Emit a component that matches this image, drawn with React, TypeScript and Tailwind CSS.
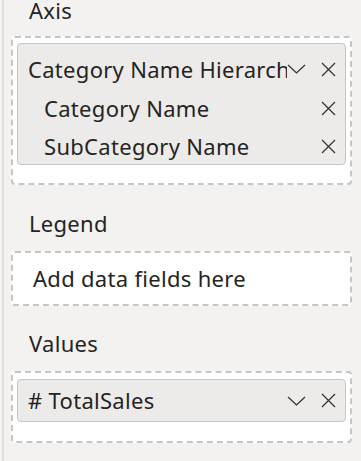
import React from 'react';

const font = { fontFamily: '"Noto Sans", "Open Sans", sans-serif' };

function CloseIcon() {
  return (
    <svg width="15" height="15" viewBox="0 0 15 15" className="shrink-0">
      <path d="M1 1 L14 14 M14 1 L1 14" stroke="#323130" strokeWidth="1.2" fill="none" />
    </svg>
  );
}

function ChevronIcon() {
  return (
    <svg width="19" height="10" viewBox="0 0 19 10" className="shrink-0">
      <path d="M1 1 L9.5 9 L18 1" stroke="#323130" strokeWidth="1.2" fill="none" />
    </svg>
  );
}

function SectionLabel({ children, className }: { children: React.ReactNode; className?: string }) {
  return <div className={`pl-[18px] h-[20px] leading-[20px] ${className ?? ''}`}>{children}</div>;
}

export default function App() {
  return (
    <div
      className="w-[361px] h-[461px] bg-[#f3f2f1] flex overflow-hidden text-[22px] tracking-[0.3px] text-[#252423]"
      style={font}
    >
      <div className="w-[2px] ml-[2px] bg-[#e1dfdd] shrink-0" />
      <div className="flex flex-col pl-[7px] w-[348px]">
        {/* Axis */}
        <SectionLabel>Axis</SectionLabel>
        <div className="mt-[16px] w-[341px] h-[149px] border-2 border-dashed border-[#c8c6c4] rounded-[4px] bg-white pt-[5px] px-[4px]">
          <div className="h-[122px] border border-[#c8c6c4] rounded-[4px] bg-[#edebe9] pt-[5px]">
            <div className="h-[40px] flex items-center pl-[10px] pr-[9px]">
              <span className="flex-1 min-w-0 overflow-hidden whitespace-nowrap">Category Name Hierarchy</span>
              <ChevronIcon />
              <span className="w-[15px]" />
              <CloseIcon />
            </div>
            <div className="h-[38px] flex items-center pl-[26px] pr-[9px]">
              <span className="flex-1 min-w-0 overflow-hidden whitespace-nowrap">Category Name</span>
              <CloseIcon />
            </div>
            <div className="h-[38px] flex items-center pl-[26px] pr-[9px]">
              <span className="flex-1 min-w-0 overflow-hidden whitespace-nowrap">SubCategory Name</span>
              <CloseIcon />
            </div>
          </div>
        </div>

        {/* Legend */}
        <SectionLabel className="mt-[28px]">Legend</SectionLabel>
        <div className="mt-[18px] w-[341px] h-[55px] border-2 border-dashed border-[#c8c6c4] rounded-[4px] bg-white flex items-center pl-[20px]">
          Add data fields here
        </div>

        {/* Values */}
        <SectionLabel className="mt-[27px]">Values</SectionLabel>
        <div className="mt-[18px] w-[341px] h-[72px] border-2 border-dashed border-[#c8c6c4] rounded-[4px] bg-white pt-[6px] px-[4px]">
          <div className="h-[43px] border border-[#c8c6c4] rounded-[4px] bg-[#edebe9] flex items-center pl-[10px] pr-[9px]">
            <span className="flex-1 min-w-0 overflow-hidden whitespace-nowrap"># TotalSales</span>
            <ChevronIcon />
            <span className="w-[15px]" />
            <CloseIcon />
          </div>
        </div>
      </div>
    </div>
  );
}
